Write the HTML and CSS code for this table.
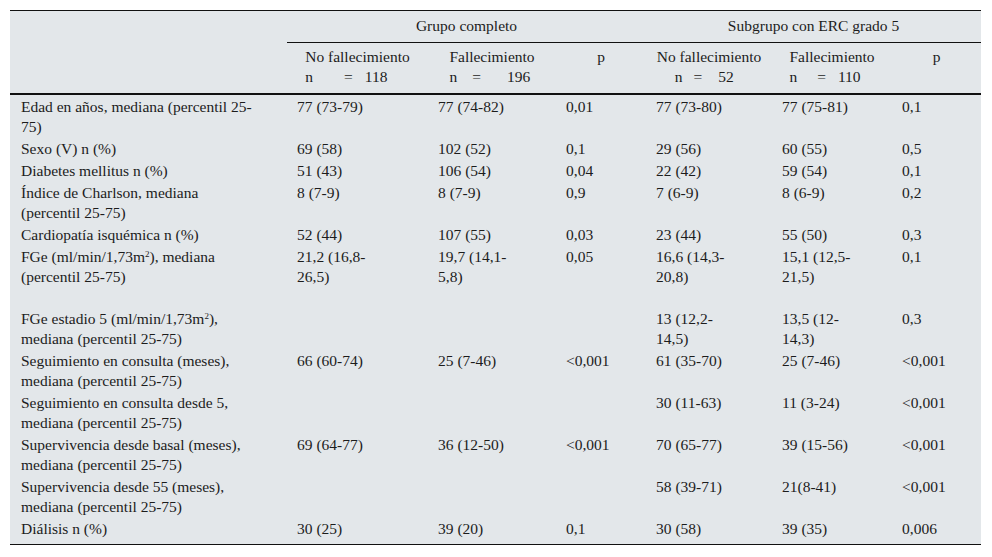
FILE: index.html
```html
<!DOCTYPE html>
<html lang="es">
<head>
<meta charset="utf-8">
<link rel="stylesheet" href="styles.css">
</head>
<body>
<table class="tbl">
  <colgroup>
    <col class="c-label">
    <col class="c1">
    <col class="c2">
    <col class="c3">
    <col class="c4">
    <col class="c5">
    <col class="c6">
  </colgroup>
  <thead>
    <tr class="h1">
      <th></th>
      <th colspan="3" class="grp">Grupo completo</th>
      <th colspan="3" class="grp">Subgrupo con ERC grado 5</th>
    </tr>
    <tr class="h2">
      <th></th>
      <th><div class="hd">No fallecimiento<div class="nl nl1"><span>n</span><span class="eq">=</span><span class="num">118</span></div></div></th>
      <th><div class="hd">Fallecimiento<div class="nl nl2"><span>n</span><span class="eq">=</span><span class="num">196</span></div></div></th>
      <th>p</th>
      <th><div class="hd">No fallecimiento<div class="nl nl4"><span class="n">n</span><span class="eq">=</span><span class="num">52</span></div></div></th>
      <th><div class="hd">Fallecimiento<div class="nl nl5"><span>n</span><span class="eq">=</span><span class="num">110</span></div></div></th>
      <th>p</th>
    </tr>
  </thead>
  <tbody>
    <tr><td>Edad en años, mediana (percentil 25-75)</td><td>77 (73-79)</td><td>77 (74-82)</td><td>0,01</td><td>77 (73-80)</td><td>77 (75-81)</td><td>0,1</td></tr>
    <tr><td>Sexo (V) n (%)</td><td>69 (58)</td><td>102 (52)</td><td>0,1</td><td>29 (56)</td><td>60 (55)</td><td>0,5</td></tr>
    <tr><td>Diabetes mellitus n (%)</td><td>51 (43)</td><td>106 (54)</td><td>0,04</td><td>22 (42)</td><td>59 (54)</td><td>0,1</td></tr>
    <tr><td>Índice de Charlson, mediana (percentil 25-75)</td><td>8 (7-9)</td><td>8 (7-9)</td><td>0,9</td><td>7 (6-9)</td><td>8 (6-9)</td><td>0,2</td></tr>
    <tr><td>Cardiopatía isquémica n (%)</td><td>52 (44)</td><td>107 (55)</td><td>0,03</td><td>23 (44)</td><td>55 (50)</td><td>0,3</td></tr>
    <tr class="tall"><td>FGe (ml/min/1,73m<sup>2</sup>), mediana (percentil 25-75)</td><td>21,2 (16,8-26,5)</td><td>19,7 (14,1-5,8)</td><td>0,05</td><td>16,6 (14,3-20,8)</td><td>15,1 (12,5-21,5)</td><td>0,1</td></tr>
    <tr><td>FGe estadio 5 (ml/min/1,73m<sup>2</sup>), mediana (percentil 25-75)</td><td></td><td></td><td></td><td>13 (12,2-14,5)</td><td>13,5 (12-14,3)</td><td>0,3</td></tr>
    <tr><td>Seguimiento en consulta (meses), mediana (percentil 25-75)</td><td>66 (60-74)</td><td>25 (7-46)</td><td>&lt;0,001</td><td>61 (35-70)</td><td>25 (7-46)</td><td>&lt;0,001</td></tr>
    <tr><td>Seguimiento en consulta desde 5, mediana (percentil 25-75)</td><td></td><td></td><td></td><td>30 (11-63)</td><td>11 (3-24)</td><td>&lt;0,001</td></tr>
    <tr><td>Supervivencia desde basal (meses), mediana (percentil 25-75)</td><td>69 (64-77)</td><td>36 (12-50)</td><td>&lt;0,001</td><td>70 (65-77)</td><td>39 (15-56)</td><td>&lt;0,001</td></tr>
    <tr><td>Supervivencia desde 55 (meses), mediana (percentil 25-75)</td><td></td><td></td><td></td><td>58 (39-71)</td><td>21(8-41)</td><td>&lt;0,001</td></tr>
    <tr><td>Diálisis n (%)</td><td>30 (25)</td><td>39 (20)</td><td>0,1</td><td>30 (58)</td><td>39 (35)</td><td>0,006</td></tr>
  </tbody>
</table>
</body>
</html>
```

FILE: styles.css
```css
html, body {
  margin: 0;
  padding: 0;
  background: #ffffff;
}

body {
  padding: 10px 10px 0 10px;
  font-family: "Liberation Serif", "Times New Roman", serif;
  font-size: 15.5px;
  color: #1c1c1c;
}

.tbl {
  width: 971px;
  table-layout: fixed;
  border-collapse: collapse;
  background: #e3e7ea;
  border-top: 1.5px solid #111;
  border-bottom: 1.5px solid #111;
}

.c-label { width: 277px; }
.c1 { width: 141px; }
.c2 { width: 128px; }
.c3 { width: 90px; }
.c4 { width: 126px; }
.c5 { width: 120px; }
.c6 { width: 89px; }

th {
  font-weight: normal;
  text-align: center;
  vertical-align: top;
  white-space: nowrap;
}

.h1 th {
  line-height: 20px;
  padding: 5px 0 6px;
}

.h1 .grp {
  border-bottom: 1.5px solid #111;
}

.h2 th {
  line-height: 20px;
  border-bottom: 2px solid #111;
  padding: 4px 0 6px;
}

.hd {
  display: inline-block;
  text-align: left;
}

.nl {
  display: flex;
}

.nl1 .eq { margin-left: 31px; }
.nl1 .num { margin-left: 12px; }

.nl2 .eq { margin-left: 15px; }
.nl2 .num { margin-left: 26px; }

.nl4 .n { margin-left: 18px; }
.nl4 .eq { margin-left: 11px; }
.nl4 .num { margin-left: 16px; }

.nl5 .eq { margin-left: 20px; }
.nl5 .num { margin-left: 12px; }

td {
  vertical-align: top;
  text-align: left;
  line-height: 20px;
  padding: 1px 38px 1px 10px;
}

td:first-child {
  padding: 1px 30px 1px 11px;
}

tbody tr:first-child td {
  padding-top: 2px;
}

tbody tr:last-child td {
  padding-bottom: 5px;
}

.tall td {
  padding-bottom: 21px;
}

sup {
  font-size: 9px;
  line-height: 0;
  vertical-align: 5px;
}
```
